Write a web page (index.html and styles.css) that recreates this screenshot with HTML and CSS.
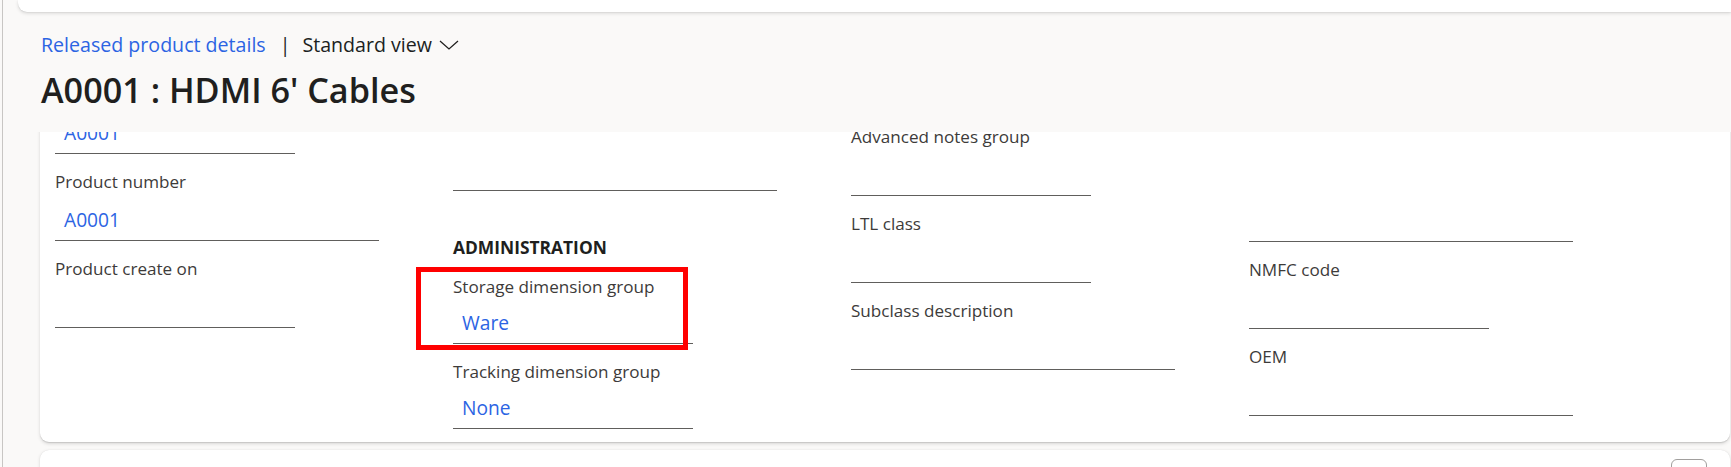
FILE: index.html
```html
<!DOCTYPE html>
<html lang="en">
<head>
<meta charset="utf-8">
<title>Released product details</title>
<link rel="stylesheet" href="styles.css">
</head>
<body>
<div class="app">
  <div class="rail"></div>
  <div class="main">
    <div class="topcard"></div>
    <header class="pagehead">
      <div class="crumbs">
        <span class="crumb-link">Released product details</span>
        <span class="sep">|</span>
        <span class="view">Standard view</span>
        <svg class="chev" width="20" height="10" viewBox="0 0 20 10" aria-hidden="true"><polyline points="1,1 10,9 19,1" fill="none" stroke="#201f1e" stroke-width="1.3"/></svg>
      </div>
      <h1 class="title">A0001 : HDMI 6' Cables</h1>
    </header>
    <div class="scroller">
      <section class="card card--details">
        <div class="col col--1">
          <div class="field">
            <div class="label"></div>
            <div class="input input--short">A0001</div>
          </div>
          <div class="field">
            <div class="label">Product number</div>
            <div class="input input--long">A0001</div>
          </div>
          <div class="field">
            <div class="label">Product create on</div>
            <div class="input input--short"></div>
          </div>
        </div>
        <div class="col col--2">
          <div class="field">
            <div class="label"></div>
            <div class="input input--long"></div>
          </div>
          <div class="group-title">ADMINISTRATION</div>
          <div class="field field--tight">
            <div class="label">Storage dimension group</div>
            <div class="input input--short">Ware</div>
            <div class="highlight"></div>
          </div>
          <div class="field field--tight">
            <div class="label">Tracking dimension group</div>
            <div class="input input--short">None</div>
          </div>
        </div>
        <div class="col col--3">
          <div class="field">
            <div class="label">Advanced notes group</div>
            <div class="input input--short"></div>
          </div>
          <div class="field">
            <div class="label">LTL class</div>
            <div class="input input--short"></div>
          </div>
          <div class="field">
            <div class="label">Subclass description</div>
            <div class="input input--long"></div>
          </div>
        </div>
        <div class="col col--4">
          <div class="field">
            <div class="label"></div>
            <div class="input input--long"></div>
          </div>
          <div class="field">
            <div class="label">NMFC code</div>
            <div class="input input--short"></div>
          </div>
          <div class="field">
            <div class="label">OEM</div>
            <div class="input input--long"></div>
          </div>
        </div>
      </section>
      <section class="card card--next">
        <div class="next-bar"><button class="mini-btn" type="button" aria-label="More"></button></div>
      </section>
    </div>
  </div>
</div>
</body>
</html>
```

FILE: styles.css
```css
* { box-sizing: border-box; }

html, body {
  margin: 0;
  padding: 0;
  height: 467px;
  overflow: hidden;
  background: #faf9f8;
  font-family: "Open Sans", "Noto Sans", sans-serif;
  color: #201f1e;
}

.app {
  display: flex;
  height: 467px;
}

.rail {
  width: 3px;
  flex: none;
  border-right: 1px solid #c8c6c4;
  background: #faf9f8;
}

.main {
  flex: 1;
  display: flex;
  flex-direction: column;
  min-width: 0;
}

.topcard {
  flex: none;
  height: 12px;
  margin-left: 15px;
  background: #ffffff;
  border-bottom-left-radius: 9px;
  box-shadow: 0 1.6px 3.6px rgba(0,0,0,0.13), 0 0.3px 0.9px rgba(0,0,0,0.11);
  position: relative;
  z-index: 2;
}

.pagehead {
  flex: none;
  height: 120px;
  padding: 19px 0 0 38px;
  background: #faf9f8;
}

.crumbs {
  display: flex;
  align-items: baseline;
  font-size: 19.6px;
  line-height: 28px;
  white-space: nowrap;
}

.crumb-link { color: #2c64e3; }

.sep {
  margin: 0 12px 0 14px;
  color: #201f1e;
}

.view { color: #201f1e; }

.chev {
  margin-left: 7px;
  align-self: flex-start;
  margin-top: 9px;
}

.title {
  margin: 9px 0 0 0;
  font-size: 34.2px;
  line-height: 44px;
  font-weight: 600;
  color: #201f1e;
  white-space: nowrap;
}

.scroller {
  flex: 1;
  overflow: hidden;
  padding: 0 1px 0 37px;
}

.card {
  background: #ffffff;
  box-shadow: 0 1.6px 3.6px rgba(0,0,0,0.13), 0 0.3px 0.9px rgba(0,0,0,0.11);
}

.card--details {
  margin-top: -52px;
  height: 362px;
  border-bottom-left-radius: 9px;
  border-bottom-right-radius: 9px;
  display: grid;
  grid-template-columns: repeat(4, 398px);
  align-items: start;
  padding-left: 15px;
}

.col {
  display: flex;
  flex-direction: column;
  gap: 16px;
}

.col--1 { padding-top: 3px; }
.col--2 { padding-top: 40px; }
.col--3 { padding-top: 45px; }
.col--4 { padding-top: 91px; }

.field {
  position: relative;
  display: flex;
  flex-direction: column;
}

.label {
  height: 24px;
  font-size: 17.1px;
  line-height: 24px;
  color: #3d3b3a;
  white-space: nowrap;
  margin-bottom: 12px;
}

.field--tight .label { margin-bottom: 10px; }

.input {
  height: 35px;
  padding: 0 0 6px 9px;
  font-size: 19.2px;
  line-height: 28px;
  color: #2c64e3;
  border-bottom: 1px solid #605e5c;
  white-space: nowrap;
}

.input--short { width: 240px; }
.input--long { width: 324px; }

.group-title {
  margin-top: 28px;
  font-size: 17.4px;
  line-height: 24px;
  font-weight: 700;
  color: #201f1e;
  white-space: nowrap;
}

.highlight {
  position: absolute;
  left: -37px;
  top: -8px;
  width: 272px;
  height: 83px;
  border: 5px solid #ff0000;
  pointer-events: none;
}

.card--next {
  margin-top: 8px;
  height: 60px;
  border-top-left-radius: 9px;
  border-top-right-radius: 9px;
}

.next-bar {
  display: flex;
  justify-content: flex-end;
  padding: 9px 23px 0 0;
}

.mini-btn {
  width: 36px;
  height: 28px;
  padding: 0;
  border: 1px solid #a19f9d;
  border-radius: 6px;
  background: #ffffff;
}
```
